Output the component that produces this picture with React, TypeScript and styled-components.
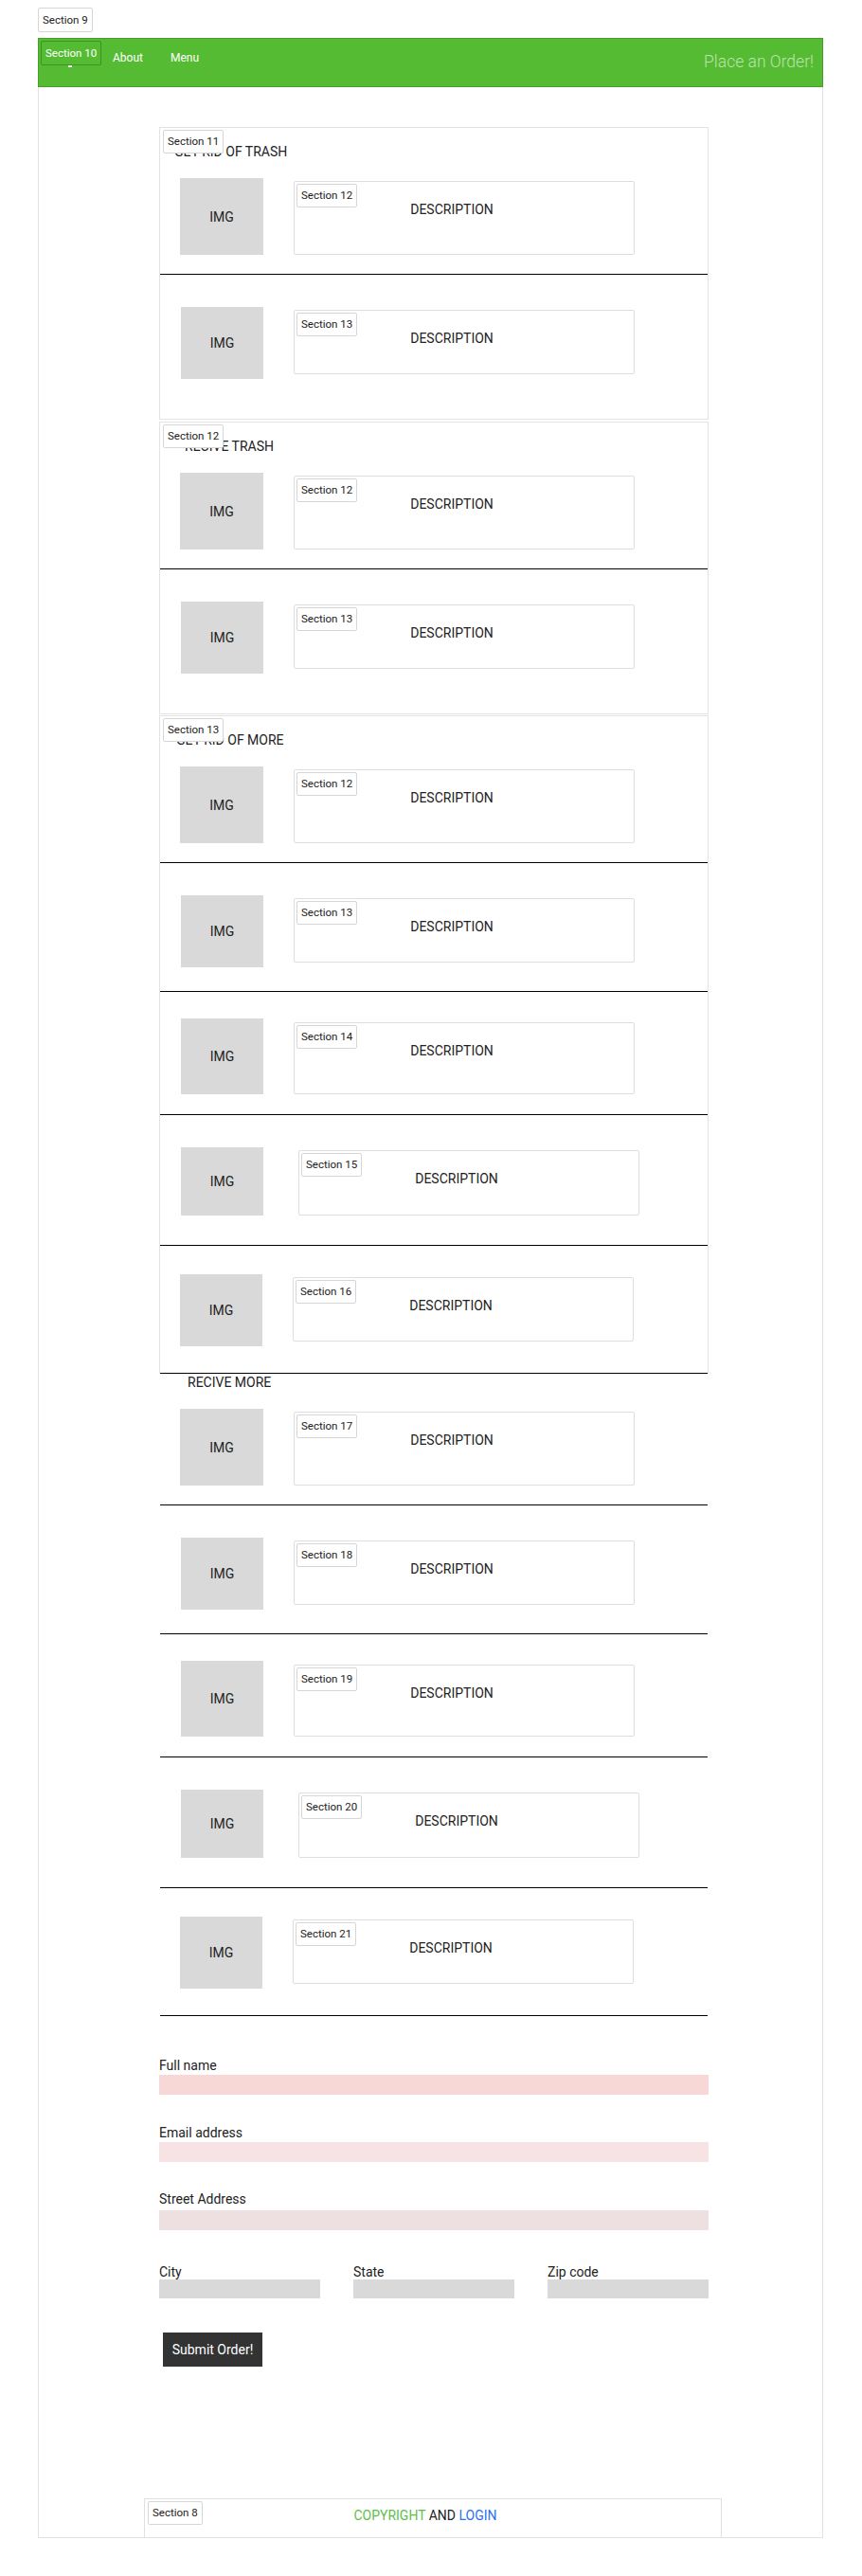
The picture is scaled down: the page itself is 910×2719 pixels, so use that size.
import styled, { createGlobalStyle } from "styled-components";

const GlobalStyle = createGlobalStyle`
  * {
    box-sizing: border-box;
  }
  body {
    margin: 0;
    background: #fff;
    color: #222;
    font-family: Roboto, "Liberation Sans", sans-serif;
  }
`;

interface RowSpec {
  tag: string;
  pt: number;
  img: number;
  pb: number;
  desc: number;
  dy: number;
  dx?: number;
  imgX?: number;
  imgW?: number;
  divider: boolean;
}

const Page = styled.div`
  padding: 8px 0 41px 40px;
`;

const Tag = styled.span`
  display: inline-block;
  padding: 4px;
  font-size: 11.5px;
  line-height: 15px;
  color: #222;
  background: #fff;
  border: 1px solid #d6d6d6;
  border-radius: 2px;
  white-space: nowrap;
`;

const PageTag = styled(Tag)`
  height: 26px;
  padding-top: 5px;
`;

const CornerTag = styled(Tag)<{ $x?: number; $y?: number }>`
  position: absolute;
  top: ${(p) => p.$y ?? 2}px;
  left: ${(p) => p.$x ?? 2}px;
  z-index: 1;
`;

const NavTag = styled(CornerTag)`
  height: 26px;
  padding-top: 5px;
  color: #fff;
  background: #55bb33;
  border-color: #3f9127;
`;

const Frame = styled.div`
  width: 829px;
  margin-top: 6px;
  border: 1px solid #e2e2e2;
  border-top: none;
  display: flex;
  flex-direction: column;
`;

const Nav = styled.nav`
  position: relative;
  display: flex;
  align-items: flex-start;
  height: 52px;
  margin: 0 -1px;
  padding: 12px 9px 0 0;
  background: #55bb33;
  border: 1px solid #4a9c2d;
`;

const NavDash = styled.span`
  position: absolute;
  left: 31px;
  top: 28px;
  width: 4px;
  height: 2px;
  background: #fff;
`;

const NavLinks = styled.div`
  display: flex;
  gap: 29px;
  margin-left: 78px;
`;

const NavLink = styled.a`
  color: #fff;
  font-size: 12px;
  line-height: 16px;
  text-decoration: none;
`;

const OrderLink = styled.a`
  margin-left: auto;
  margin-top: 2px;
  color: rgba(255, 255, 255, 0.6);
  font-size: 17.5px;
  font-weight: 300;
  line-height: 20px;
`;

const Main = styled.main`
  width: 580px;
  margin: 42px 0 0 127px;
  display: flex;
  flex-direction: column;
`;

const Section = styled.section<{ $bare?: boolean; $flush?: boolean }>`
  position: relative;
  margin-top: 2px;
  border: 1px solid ${(p) => (p.$bare ? "transparent" : "#e3e3e3")};
  border-top-width: ${(p) => (p.$bare ? 0 : 1)}px;
  border-bottom-width: ${(p) => (p.$bare || p.$flush ? 0 : 1)}px;
`;

const Heading = styled.h2<{ $top: number; $left: number }>`
  margin: 0;
  padding: ${(p) => p.$top}px 0 0 ${(p) => p.$left}px;
  font-size: 14px;
  font-weight: 400;
  line-height: 18px;
  color: #222;
`;

const Row = styled.div<{ $pt: number; $pb: number; $divider: boolean }>`
  display: flex;
  align-items: flex-start;
  padding: ${(p) => p.$pt}px 0 ${(p) => p.$pb}px 0;
  border-bottom: ${(p) => (p.$divider ? "1px solid #000" : "none")};
`;

const ImgBox = styled.div<{ $h: number; $x: number; $w: number }>`
  display: flex;
  align-items: center;
  justify-content: center;
  flex: none;
  width: ${(p) => p.$w}px;
  height: ${(p) => p.$h}px;
  margin-left: ${(p) => p.$x}px;
  background: #d9d9d9;
  font-size: 14px;
`;

const Desc = styled.div<{ $h: number; $dy: number; $dx: number }>`
  position: relative;
  flex: none;
  width: 360px;
  height: ${(p) => p.$h}px;
  margin: ${(p) => p.$dy}px 0 0 ${(p) => 32 + p.$dx}px;
  padding: 20px 26px 0 0;
  border: 1px solid #dedede;
  border-radius: 2px;
  text-align: center;
  font-size: 14px;
  line-height: 18px;
`;

const Form = styled.form`
  display: flex;
  flex-direction: column;
  margin-top: 44px;
`;

const Field = styled.div<{ $gap?: number }>`
  margin-top: ${(p) => p.$gap ?? 0}px;
`;

const Label = styled.label<{ $space?: number }>`
  display: block;
  margin-bottom: ${(p) => p.$space ?? 2}px;
  font-size: 14px;
  line-height: 16px;
  color: #222;
`;

const Input = styled.input<{ $bg: string; $h?: number }>`
  display: block;
  width: 100%;
  height: ${(p) => p.$h ?? 21}px;
  border: none;
  outline: none;
  background: ${(p) => p.$bg};
`;

const CityRow = styled.div`
  display: grid;
  grid-template-columns: repeat(3, 170px);
  column-gap: 35px;
  margin-top: 36px;
`;

const Submit = styled.button`
  width: 105px;
  height: 36px;
  margin: 36px 0 0 4px;
  border: none;
  background: #333;
  color: #fff;
  font-family: Roboto, "Liberation Sans", sans-serif;
  font-size: 14px;
`;

const Footer = styled.footer`
  position: relative;
  width: 610px;
  height: 41px;
  margin: 139px 0 0 111px;
  padding: 8px 16px 0 0;
  border: 1px solid #e0e0e0;
  border-bottom: none;
  text-align: center;
  font-size: 14px;
  line-height: 18px;
`;

const Green = styled.span`
  color: #5cbf48;
`;

const Blue = styled.span`
  color: #2a6ff2;
`;

const first = (tag: string): RowSpec => ({
  tag,
  pt: 19,
  img: 81,
  pb: 20,
  desc: 78,
  dy: 3,
  imgX: 21,
  imgW: 88,
  divider: true,
});

const fiveRows = (n: number): RowSpec[] => [
  first(`Section ${n}`),
  { tag: `Section ${n + 1}`, pt: 34, img: 76, pb: 25, desc: 68, dy: 3, divider: true },
  { tag: `Section ${n + 2}`, pt: 28, img: 80, pb: 21, desc: 76, dy: 4, divider: true },
  { tag: `Section ${n + 3}`, pt: 34, img: 72, pb: 31, desc: 69, dy: 3, dx: 5, divider: true },
  { tag: `Section ${n + 4}`, pt: 30, img: 76, pb: 28, desc: 68, dy: 3, imgX: 21, divider: true },
];

const twoRows: RowSpec[] = [
  first("Section 12"),
  { tag: "Section 13", pt: 34, img: 76, pb: 42, desc: 68, dy: 3, divider: false },
];

const ItemRow = ({ spec }: { spec: RowSpec }) => (
  <Row $pt={spec.pt} $pb={spec.pb} $divider={spec.divider}>
    <ImgBox $h={spec.img} $x={spec.imgX ?? 22} $w={spec.imgW ?? 87}>
      IMG
    </ImgBox>
    <Desc $h={spec.desc} $dy={spec.dy} $dx={spec.dx ?? 0}>
      <CornerTag>{spec.tag}</CornerTag>
      DESCRIPTION
    </Desc>
  </Row>
);

const App = () => {
  return (
    <Page>
      <GlobalStyle />
      <PageTag>Section 9</PageTag>
      <Frame>
        <Nav>
          <NavTag>Section 10</NavTag>
          <NavDash />
          <NavLinks>
            <NavLink>About</NavLink>
            <NavLink>Menu</NavLink>
          </NavLinks>
          <OrderLink>Place an Order!</OrderLink>
        </Nav>

        <Main>
          <Section style={{ marginTop: 0 }}>
            <CornerTag $x={3}>Section 11</CornerTag>
            <Heading $top={16} $left={15}>GET RID OF TRASH</Heading>
            {twoRows.map((r) => (
              <ItemRow key={r.tag} spec={r} />
            ))}
          </Section>

          <Section>
            <CornerTag $x={3}>Section 12</CornerTag>
            <Heading $top={16} $left={26}>RECIVE TRASH</Heading>
            {twoRows.map((r) => (
              <ItemRow key={r.tag} spec={r} />
            ))}
          </Section>

          <Section $flush style={{ marginTop: 1 }}>
            <CornerTag $x={3}>Section 13</CornerTag>
            <Heading $top={16} $left={17}>GET RID OF MORE</Heading>
            {fiveRows(12).map((r) => (
              <ItemRow key={r.tag} spec={r} />
            ))}
          </Section>

          <Section $bare style={{ marginTop: 0 }}>
            <Heading $top={0} $left={29}>RECIVE MORE</Heading>
            {fiveRows(17).map((r) => (
              <ItemRow key={r.tag} spec={r} />
            ))}
          </Section>

          <Form onSubmit={(e) => e.preventDefault()}>
            <Field>
              <Label>Full name</Label>
              <Input $bg="#f8d7d7" />
            </Field>
            <Field $gap={32}>
              <Label>Email address</Label>
              <Input $bg="#f7e3e3" />
            </Field>
            <Field $gap={31}>
              <Label $space={4}>Street Address</Label>
              <Input $bg="#eee0e0" />
            </Field>
            <CityRow>
              <Field>
                <Label $space={0}>City</Label>
                <Input $bg="#d9d9d9" $h={20} />
              </Field>
              <Field>
                <Label $space={0}>State</Label>
                <Input $bg="#d9d9d9" $h={20} />
              </Field>
              <Field>
                <Label $space={0}>Zip code</Label>
                <Input $bg="#d9d9d9" $h={20} />
              </Field>
            </CityRow>
            <Submit type="submit">Submit Order!</Submit>
          </Form>
        </Main>

        <Footer>
          <CornerTag $x={3}>Section 8</CornerTag>
          <Green>COPYRIGHT</Green> AND <Blue>LOGIN</Blue>
        </Footer>
      </Frame>
    </Page>
  );
};

export default App;
